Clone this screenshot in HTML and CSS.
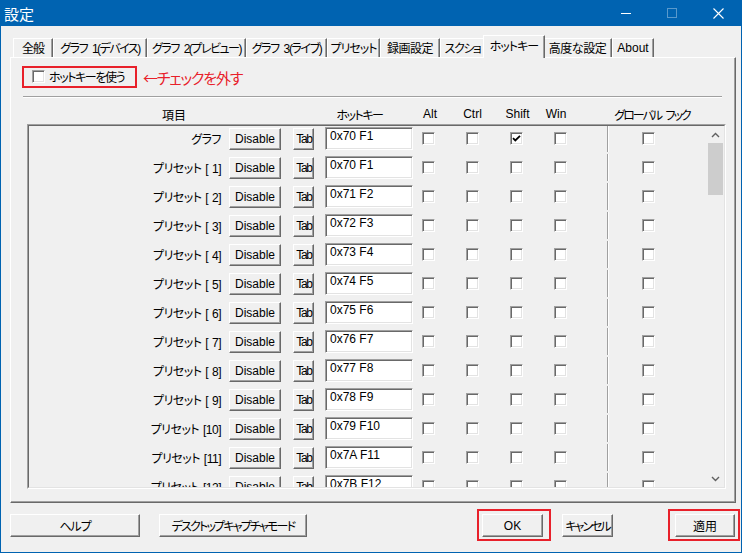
FILE: index.html
```html
<!DOCTYPE html>
<html lang="ja">
<head>
<meta charset="utf-8">
<title>設定</title>
<link rel="stylesheet" href="styles.css">
</head>
<body>
<div class="window">
  <div class="titlebar">
    <span class="title">設定</span>
    <div class="caption">
      <span class="cap-btn"><span class="ico-min"></span></span>
      <span class="cap-btn"><span class="ico-max"></span></span>
      <span class="cap-btn"><svg width="11" height="11" viewBox="0 0 11 11"><path d="M0.5 0.5L10.5 10.5M10.5 0.5L0.5 10.5" stroke="#fff" stroke-width="1.1" fill="none"/></svg></span>
    </div>
  </div>

  <div class="tabs">
    <span class="tab t1">全般</span>
    <span class="tab t2">グラフ 1(デバイス)</span>
    <span class="tab t3">グラフ 2(プレビュー)</span>
    <span class="tab t4">グラフ 3(ライブ)</span>
    <span class="tab t5">プリセット</span>
    <span class="tab t6">録画設定</span>
    <span class="tab t7">スクショ</span>
    <span class="tab t8 active">ホットキー</span>
    <span class="tab t9">高度な設定</span>
    <span class="tab t10">About</span>
  </div>

  <div class="panel">
    <div class="toggle-row">
      <label class="hk-toggle"><span class="cb"></span><span class="hk-text">ホットキーを使う</span></label>
      <span class="annot">←チェックを外す</span>
    </div>
    <div class="sep"></div>
    <div class="header">
      <span class="h h1">項目</span>
      <span class="h h2">ホットキー</span>
      <span class="h h3">Alt</span>
      <span class="h h4">Ctrl</span>
      <span class="h h5">Shift</span>
      <span class="h h6">Win</span>
      <span class="h h7">グローバル フック</span>
    </div>
    <div class="list">
      <div class="list-inner">
        <div class="rows">
          <div class="row"><span class="lbl">グラフ</span><span class="btn b-dis">Disable</span><span class="btn b-tab">Tab</span><span class="edit">0x70 F1</span><span class="cb c-alt"></span><span class="cb c-n"></span><span class="cb c-n checked"><svg width="11" height="11" viewBox="0 0 11 11"><path d="M2 5.2L4.3 7.5L9 2.8" stroke="#000" stroke-width="1.8" fill="none"/></svg></span><span class="cb c-n"></span><span class="vl"></span><span class="cb c-g"></span></div>
          <div class="row"><span class="lbl">プリセット [ 1]</span><span class="btn b-dis">Disable</span><span class="btn b-tab">Tab</span><span class="edit">0x70 F1</span><span class="cb c-alt"></span><span class="cb c-n"></span><span class="cb c-n"></span><span class="cb c-n"></span><span class="vl"></span><span class="cb c-g"></span></div>
          <div class="row"><span class="lbl">プリセット [ 2]</span><span class="btn b-dis">Disable</span><span class="btn b-tab">Tab</span><span class="edit">0x71 F2</span><span class="cb c-alt"></span><span class="cb c-n"></span><span class="cb c-n"></span><span class="cb c-n"></span><span class="vl"></span><span class="cb c-g"></span></div>
          <div class="row"><span class="lbl">プリセット [ 3]</span><span class="btn b-dis">Disable</span><span class="btn b-tab">Tab</span><span class="edit">0x72 F3</span><span class="cb c-alt"></span><span class="cb c-n"></span><span class="cb c-n"></span><span class="cb c-n"></span><span class="vl"></span><span class="cb c-g"></span></div>
          <div class="row"><span class="lbl">プリセット [ 4]</span><span class="btn b-dis">Disable</span><span class="btn b-tab">Tab</span><span class="edit">0x73 F4</span><span class="cb c-alt"></span><span class="cb c-n"></span><span class="cb c-n"></span><span class="cb c-n"></span><span class="vl"></span><span class="cb c-g"></span></div>
          <div class="row"><span class="lbl">プリセット [ 5]</span><span class="btn b-dis">Disable</span><span class="btn b-tab">Tab</span><span class="edit">0x74 F5</span><span class="cb c-alt"></span><span class="cb c-n"></span><span class="cb c-n"></span><span class="cb c-n"></span><span class="vl"></span><span class="cb c-g"></span></div>
          <div class="row"><span class="lbl">プリセット [ 6]</span><span class="btn b-dis">Disable</span><span class="btn b-tab">Tab</span><span class="edit">0x75 F6</span><span class="cb c-alt"></span><span class="cb c-n"></span><span class="cb c-n"></span><span class="cb c-n"></span><span class="vl"></span><span class="cb c-g"></span></div>
          <div class="row"><span class="lbl">プリセット [ 7]</span><span class="btn b-dis">Disable</span><span class="btn b-tab">Tab</span><span class="edit">0x76 F7</span><span class="cb c-alt"></span><span class="cb c-n"></span><span class="cb c-n"></span><span class="cb c-n"></span><span class="vl"></span><span class="cb c-g"></span></div>
          <div class="row"><span class="lbl">プリセット [ 8]</span><span class="btn b-dis">Disable</span><span class="btn b-tab">Tab</span><span class="edit">0x77 F8</span><span class="cb c-alt"></span><span class="cb c-n"></span><span class="cb c-n"></span><span class="cb c-n"></span><span class="vl"></span><span class="cb c-g"></span></div>
          <div class="row"><span class="lbl">プリセット [ 9]</span><span class="btn b-dis">Disable</span><span class="btn b-tab">Tab</span><span class="edit">0x78 F9</span><span class="cb c-alt"></span><span class="cb c-n"></span><span class="cb c-n"></span><span class="cb c-n"></span><span class="vl"></span><span class="cb c-g"></span></div>
          <div class="row"><span class="lbl">プリセット [10]</span><span class="btn b-dis">Disable</span><span class="btn b-tab">Tab</span><span class="edit">0x79 F10</span><span class="cb c-alt"></span><span class="cb c-n"></span><span class="cb c-n"></span><span class="cb c-n"></span><span class="vl"></span><span class="cb c-g"></span></div>
          <div class="row"><span class="lbl">プリセット [11]</span><span class="btn b-dis">Disable</span><span class="btn b-tab">Tab</span><span class="edit">0x7A F11</span><span class="cb c-alt"></span><span class="cb c-n"></span><span class="cb c-n"></span><span class="cb c-n"></span><span class="vl"></span><span class="cb c-g"></span></div>
          <div class="row"><span class="lbl">プリセット [12]</span><span class="btn b-dis">Disable</span><span class="btn b-tab">Tab</span><span class="edit">0x7B F12</span><span class="cb c-alt"></span><span class="cb c-n"></span><span class="cb c-n"></span><span class="cb c-n"></span><span class="vl"></span><span class="cb c-g"></span></div>
        </div>
        <div class="sb">
          <span class="sb-btn"><svg width="9" height="6" viewBox="0 0 9 6"><path d="M1 5L4.5 1.5L8 5" stroke="#606060" stroke-width="1.4" fill="none"/></svg></span>
          <div class="sb-track"><div class="sb-thumb"></div></div>
          <span class="sb-btn"><svg width="9" height="6" viewBox="0 0 9 6"><path d="M1 1L4.5 4.5L8 1" stroke="#606060" stroke-width="1.4" fill="none"/></svg></span>
        </div>
      </div>
    </div>
  </div>

  <div class="footer">
    <span class="btn f-help">ヘルプ</span>
    <span class="btn f-cap">デスクトップキャプチャモード</span>
    <span class="btn f-ok">OK</span>
    <span class="btn f-cancel">キャンセル</span>
    <span class="btn f-apply">適用</span>
    <span class="mark mark-ok"></span>
    <span class="mark mark-apply"></span>
  </div>
</div>
</body>
</html>
```

FILE: styles.css
```css
* { box-sizing: border-box; }
html, body { margin: 0; padding: 0; }
body {
  width: 742px;
  height: 553px;
  overflow: hidden;
  background: #F0F0F0;
  font-family: "Liberation Sans", "Noto Sans CJK JP", sans-serif;
  font-size: 12px;
  color: #000;
  font-feature-settings: "palt";
}
.window {
  width: 742px;
  height: 553px;
  border: 1px solid #0063B1;
  border-top: 0;
  display: flex;
  flex-direction: column;
}
.titlebar {
  height: 26px;
  flex: none;
  background: #0063B1;
  display: flex;
  align-items: center;
  color: #fff;
}
.title { font-size: 15px; padding-left: 3px; font-family: "Noto Sans CJK JP", sans-serif; }
.caption { margin-left: auto; display: flex; }
.cap-btn { width: 46px; height: 26px; display: flex; align-items: center; justify-content: center; }
.ico-min { width: 10px; height: 1px; background: #fff; }
.ico-max { width: 10px; height: 10px; border: 1px solid rgba(255,255,255,0.35); }

.tabs {
  display: flex;
  align-items: flex-end;
  height: 22px;
  margin-top: 9px;
  padding-left: 12px;
  flex: none;
}
.tab {
  height: 19px;
  flex: none;
  border-top: 1px solid #fff;
  border-left: 1px solid #fff;
  border-right: 1px solid #696969;
  box-shadow: inset -1px 0 #A0A0A0;
  background: #F0F0F0;
  display: flex;
  align-items: center;
  justify-content: center;
  white-space: pre;
  padding-bottom: 1px;
  letter-spacing: -1px;
  word-spacing: 3px;
}
.t1 { width: 40px; }
.t2 { width: 94px; letter-spacing: -1.5px; }
.t3 { width: 99px; letter-spacing: -1.5px; }
.t4 { width: 81px; letter-spacing: -1.4px; }
.t5 { width: 53px; }
.t6 { width: 60px; letter-spacing: -0.5px; }
.t7 { width: 45px; letter-spacing: -1.5px; }
.t8 { width: 62px; }
.t9 { width: 69px; letter-spacing: -0.5px; }
.t10 { width: 42px; letter-spacing: 0; }
.tab.active {
  height: 23px;
  margin: 0 -2px -1px;
  position: relative;
  z-index: 1;
  padding-bottom: 3px;
}

.panel {
  margin-left: 9px;
  width: 726px;
  height: 446px;
  flex: none;
  border: 1px solid;
  border-color: #fff #696969 #696969 #fff;
  box-shadow: inset -1px -1px #A0A0A0;
}
.toggle-row { display: flex; align-items: center; margin: 8px 0 0 11px; }
.hk-toggle {
  width: 115px;
  height: 22px;
  border: 2px solid #E8202A;
  display: flex;
  align-items: center;
  gap: 4px;
  padding: 0 0 1px 8px;
  white-space: nowrap;
}
.hk-text { letter-spacing: -1.4px; }
.annot {
  margin-left: 6px;
  color: #E8202A;
  font-size: 15px;
  letter-spacing: -1.2px;
  font-family: "Noto Sans CJK JP", sans-serif;
}

.sep {
  margin: 8px 0 0 12px;
  width: 699px;
  border-top: 1px solid #A0A0A0;
  border-bottom: 1px solid #fff;
}
.header {
  display: flex;
  align-items: center;
  height: 26px;
  padding-top: 6px;
  margin-left: 16px;
}
.h { display: flex; justify-content: center; white-space: pre; flex: none; }
.h1 { width: 294px; }
.h2 { width: 77px; letter-spacing: -1.5px; }
.h3 { width: 64px; }
.h4 { width: 21px; }
.h5 { width: 69px; }
.h6 { width: 8px; }
.h7 { width: 104px; margin-left: 40px; letter-spacing: -2px; word-spacing: 3px; }

.list {
  margin-left: 16px;
  width: 699px;
  height: 365px;
  border: 1px solid;
  border-color: #A0A0A0 #fff #fff #A0A0A0;
}
.list-inner {
  height: 100%;
  border: 1px solid;
  border-color: #696969 #E3E3E3 #E3E3E3 #696969;
  display: flex;
}
.rows { flex: 1; overflow: hidden; }
.row {
  display: flex;
  align-items: center;
  height: 29px;
  padding-bottom: 4px;
}
.lbl {
  width: 192px;
  flex: none;
  text-align: right;
  white-space: pre;
  letter-spacing: -0.5px;
  word-spacing: 1px;
}

.btn {
  display: flex;
  align-items: center;
  justify-content: center;
  flex: none;
  white-space: nowrap;
  background: #F0F0F0;
  border: 1px solid;
  border-color: #fff #696969 #696969 #fff;
  box-shadow: inset -1px -1px #A0A0A0;
}
.b-dis { margin-left: 8px; width: 52px; height: 22px; }
.b-tab { margin-left: 12px; width: 21px; height: 22px; letter-spacing: -1.3px; padding-left: 1px; }
.edit {
  margin-left: 11px;
  width: 88px;
  height: 23px;
  flex: none;
  background: #fff;
  border: 1px solid;
  border-color: #A0A0A0 #fff #fff #A0A0A0;
  box-shadow: inset 1px 1px #696969, inset -1px -1px #E3E3E3;
  padding: 1px 4px;
  line-height: 14px;
  white-space: nowrap;
}
.cb {
  width: 13px;
  height: 13px;
  flex: none;
  background: #fff;
  border: 1px solid;
  border-color: #A0A0A0 #fff #fff #A0A0A0;
  box-shadow: inset 1px 1px #696969, inset -1px -1px #E3E3E3;
  display: flex;
  align-items: center;
  justify-content: center;
}
.c-alt { margin-left: 9px; }
.c-n { margin-left: 31px; }
.vl {
  margin-left: 40px;
  width: 1px;
  height: 27px;
  flex: none;
  background: #A0A0A0;
  box-shadow: 1px 0 #fff;
}
.c-g { margin-left: 34px; }

.sb {
  width: 17px;
  flex: none;
  display: flex;
  flex-direction: column;
  background: #F0F0F0;
}
.sb-btn { height: 17px; flex: none; display: flex; align-items: center; justify-content: center; }
.sb-track { flex: 1; }
.sb-thumb { height: 52px; margin: 0 1px; background: #CDCDCD; }

.footer {
  display: flex;
  height: 23px;
  margin-top: 11px;
  position: relative;
  flex: none;
}
.footer .btn { height: 23px; }
.f-help { margin-left: 9px; width: 130px; letter-spacing: -1px; }
.f-cap { margin-left: 19px; width: 148px; letter-spacing: -1.8px; }
.f-ok { margin-left: 175px; width: 61px; }
.f-cancel { margin-left: 19px; width: 51px; letter-spacing: -2px; }
.f-apply { margin-left: 62px; width: 60px; }
.mark {
  position: absolute;
  top: -5px;
  height: 32px;
  border: 2px solid #E8202A;
}
.mark-ok { left: 476px; width: 74px; }
.mark-apply { left: 667px; width: 72px; }
```
